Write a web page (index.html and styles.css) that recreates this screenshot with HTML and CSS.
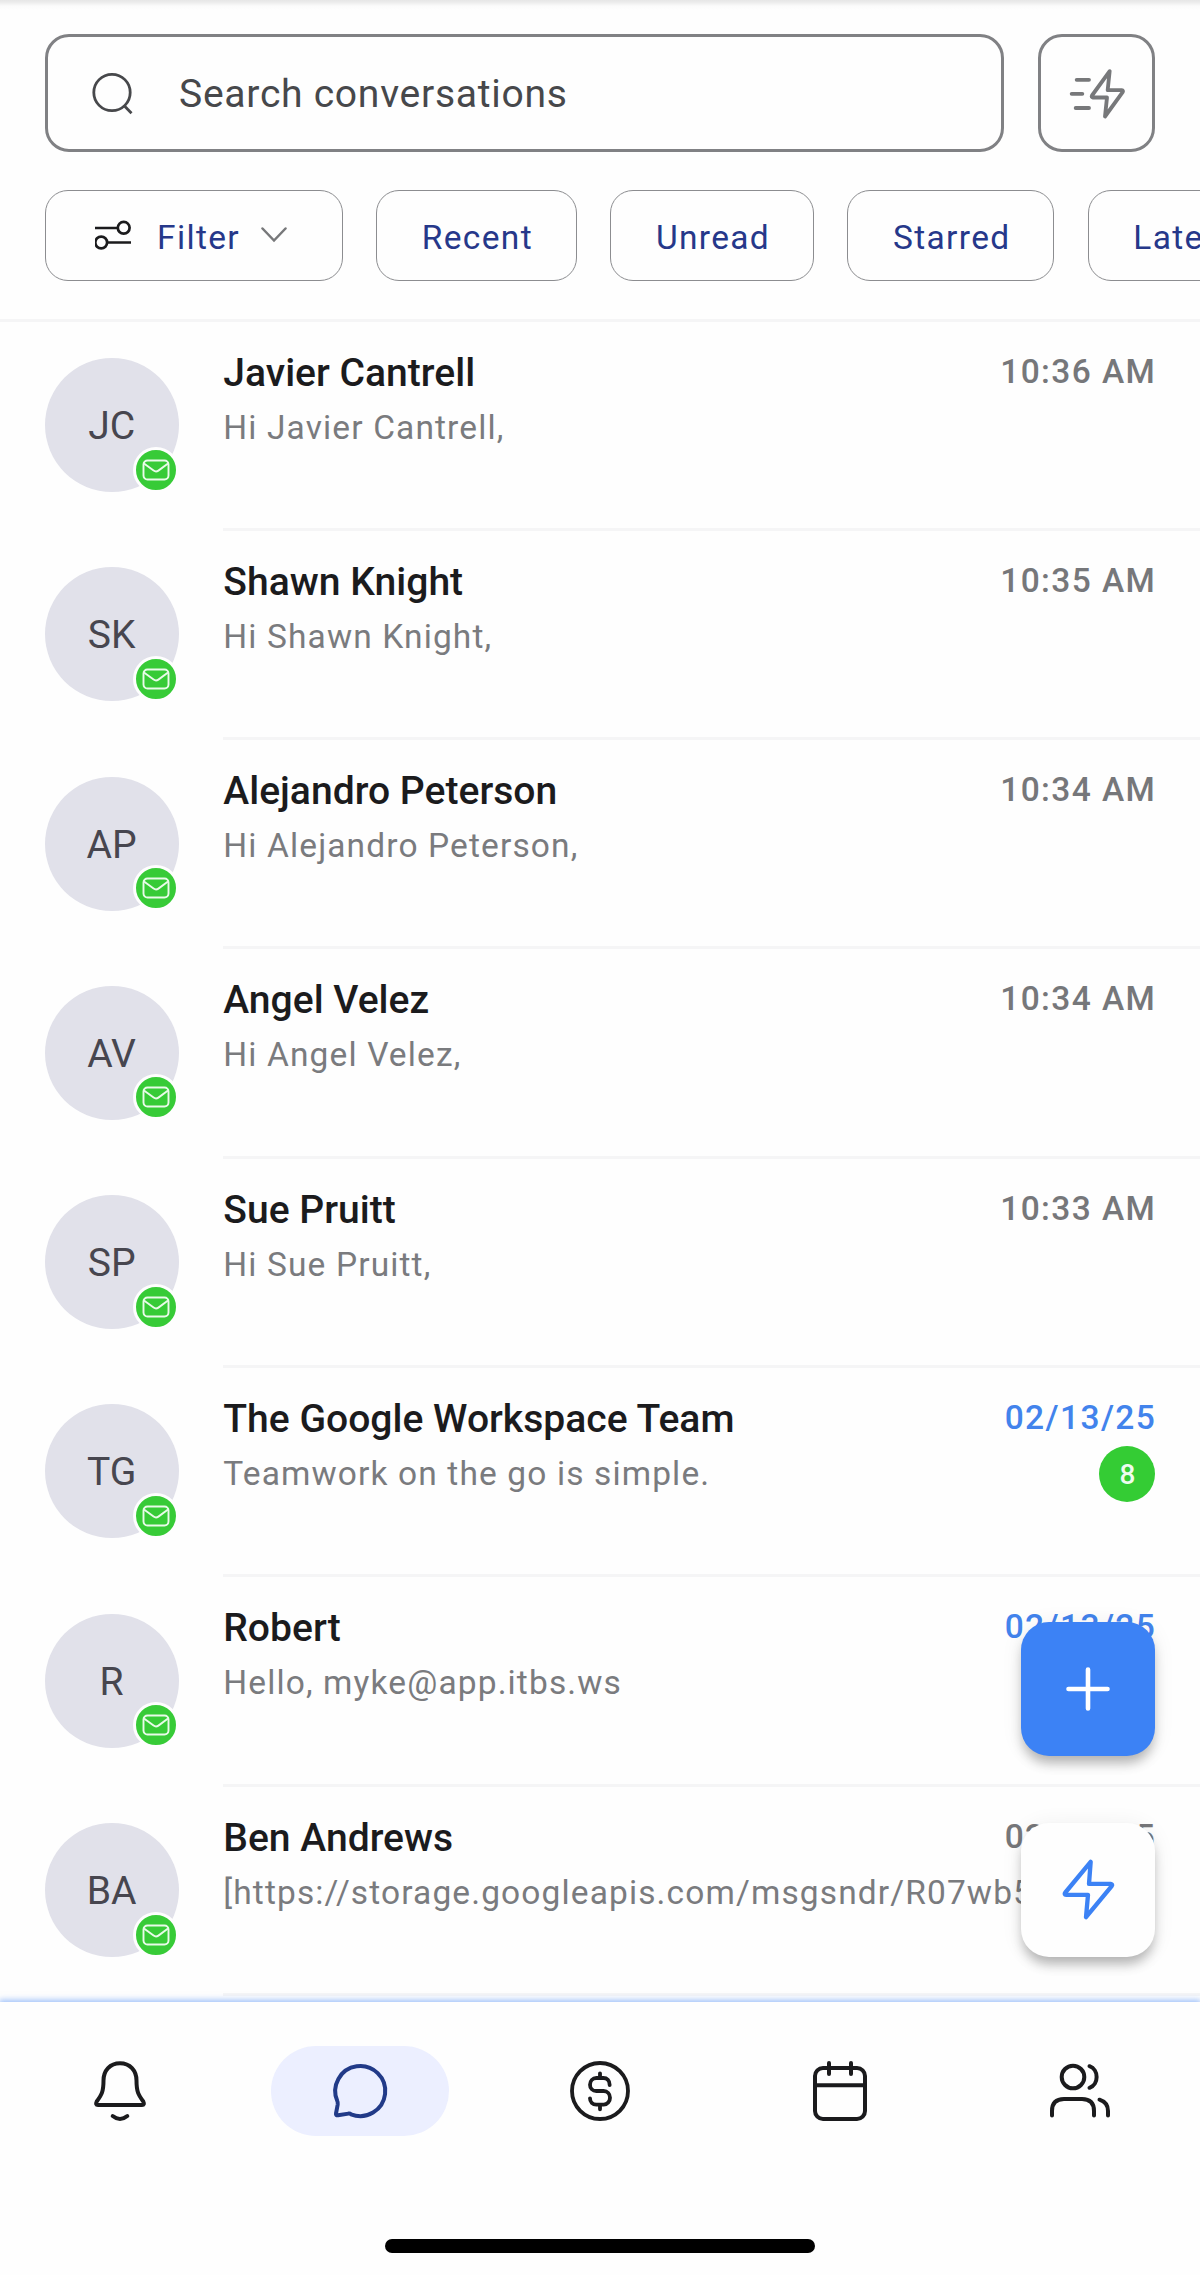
FILE: index.html
```html
<!DOCTYPE html>
<html lang="en">
<head>
<meta charset="utf-8">
<title>Conversations</title>
<link rel="stylesheet" href="styles.css">
</head>
<body>
<svg width="0" height="0" class="defs" aria-hidden="true">
  <symbol id="mail" viewBox="0 0 28 22">
    <rect x="1.5" y="1.5" width="25" height="19" rx="4"/>
    <path d="M2 4.5L11.6 11.6Q14 13.3 16.4 11.6L26 4.5"/>
  </symbol>
</svg>
<div class="app">
  <header class="header">
    <div class="search-row">
      <div class="search">
        <svg class="search-icon" width="44" height="44" viewBox="0 0 44 44"><circle cx="21" cy="21.5" r="18.2"/><path d="M33 34.5L40.5 42.2"/></svg>
        <span>Search conversations</span>
      </div>
      <button class="quick" aria-label="Quick actions">
        <svg width="76" height="76" viewBox="-3 -4.5 228 228"><path d="M50 70H87M35 112H67M47 154.500H87M149 44L143 101H185Q191 102 188 107L135 180L141 123H99Q93 122 96 117Z"/></svg>
      </button>
    </div>
    <div class="chips">
      <button class="chip chip-filter">
        <svg class="sliders" width="36" height="30" viewBox="0 0 36 30"><path d="M0 8H22.500M13 22.500H36"/><circle cx="28.700" cy="7.800" r="5.900"/><circle cx="6.200" cy="22.500" r="5.900"/></svg>
        <span>Filter</span>
        <svg class="chevron" width="26" height="16" viewBox="0 0 26 16"><path d="M1.500 1.500L13 13.500L24.500 1.500"/></svg>
      </button>
      <button class="chip">Recent</button>
      <button class="chip">Unread</button>
      <button class="chip">Starred</button>
      <button class="chip">Latest</button>
    </div>
  </header>

  <main class="list">
    <article class="row">
      <div class="avatar">JC<span class="channel"><svg><use href="#mail"/></svg></span></div>
      <div class="body">
        <div class="text"><div class="name">Javier Cantrell</div><div class="preview">Hi Javier Cantrell,</div></div>
        <div class="meta"><time>10:36 AM</time></div>
      </div>
    </article>
    <article class="row">
      <div class="avatar">SK<span class="channel"><svg><use href="#mail"/></svg></span></div>
      <div class="body">
        <div class="text"><div class="name">Shawn Knight</div><div class="preview">Hi Shawn Knight,</div></div>
        <div class="meta"><time>10:35 AM</time></div>
      </div>
    </article>
    <article class="row">
      <div class="avatar">AP<span class="channel"><svg><use href="#mail"/></svg></span></div>
      <div class="body">
        <div class="text"><div class="name">Alejandro Peterson</div><div class="preview">Hi Alejandro Peterson,</div></div>
        <div class="meta"><time>10:34 AM</time></div>
      </div>
    </article>
    <article class="row">
      <div class="avatar">AV<span class="channel"><svg><use href="#mail"/></svg></span></div>
      <div class="body">
        <div class="text"><div class="name">Angel Velez</div><div class="preview">Hi Angel Velez,</div></div>
        <div class="meta"><time>10:34 AM</time></div>
      </div>
    </article>
    <article class="row">
      <div class="avatar">SP<span class="channel"><svg><use href="#mail"/></svg></span></div>
      <div class="body">
        <div class="text"><div class="name">Sue Pruitt</div><div class="preview">Hi Sue Pruitt,</div></div>
        <div class="meta"><time>10:33 AM</time></div>
      </div>
    </article>
    <article class="row unread">
      <div class="avatar">TG<span class="channel"><svg><use href="#mail"/></svg></span></div>
      <div class="body">
        <div class="text"><div class="name">The Google Workspace Team</div><div class="preview">Teamwork on the go is simple.</div></div>
        <div class="meta"><time>02/13/25</time><span class="count">8</span></div>
      </div>
    </article>
    <article class="row unread">
      <div class="avatar">R<span class="channel"><svg><use href="#mail"/></svg></span></div>
      <div class="body">
        <div class="text"><div class="name">Robert</div><div class="preview">Hello, myke@app.itbs.ws</div></div>
        <div class="meta"><time>02/13/25</time></div>
      </div>
    </article>
    <article class="row">
      <div class="avatar">BA<span class="channel"><svg><use href="#mail"/></svg></span></div>
      <div class="body">
        <div class="text"><div class="name">Ben Andrews</div><div class="preview">[https://storage.googleapis.com/msgsndr/R07wb5</div></div>
        <div class="meta"><time>02/13/25</time></div>
      </div>
    </article>
  </main>

  <div class="fabs">
    <button class="fab fab-add" aria-label="New conversation">
      <svg width="48" height="48" viewBox="0 0 48 48"><path d="M4.500 24H43.500M24 4.500V43.500"/></svg>
    </button>
    <button class="fab fab-quick" aria-label="Shortcuts">
      <svg width="80" height="80" viewBox="144 1.500 240 240"><path d="M272 37L267 103H332Q339 104 335 110L258 203L264 136H199Q191 135 196 129Z"/></svg>
    </button>
  </div>

  <nav class="nav">
    <div class="tabs">
      <a class="tab"><svg viewBox="0 0 72 72"><path d="M36 8.200C26 8.200 19.500 15.500 19.500 25.500C19.500 37 17.500 40 12.700 46.500Q11 50 14 50H58Q61 50 59.300 46.500C54.500 40 52.500 37 52.500 25.500C52.500 15.500 46 8.200 36 8.200Z"/><path d="M28.700 61Q36 67 43.300 61"/></svg></a>
      <a class="tab active"><svg viewBox="0 0 72 72"><path d="M13.300 46A25 25 0 1 1 27 59.300Q26 58.400 24.500 58.600L14 60.300Q11.600 60.500 12 58.500L13.700 49.500Q14 47.500 13.300 46Z"/></svg></a>
      <a class="tab"><svg viewBox="12 13 216 216" class="coin"><circle cx="120" cy="121" r="84"/><path d="M149 103C149 90 141 82 130 82H109C98 82 90 91 90 102S98 121 109 121H131C142 121 150 130 150 141S142 162 131 162H109C98 162 90 154 90 143M120 68V82M120 162V176"/></svg></a>
      <a class="tab"><svg viewBox="0 0 72 72"><rect x="11" y="13" width="50" height="51" rx="8"/><path d="M11 30.300H61M25 8V19M47 8V19"/></svg></a>
      <a class="tab"><svg viewBox="0 0 72 72"><ellipse cx="29" cy="22" rx="11.300" ry="11.300"/><path d="M8 60.500V56Q8 44 20 44H38Q50 44 50 56V60.500M45.500 11.200C55 14.500 55 29.500 45.500 32.800M55.500 44.700Q64 47.500 64 56V60.500"/></svg></a>
    </div>
    <div class="home-bar"></div>
  </nav>
</div>
</body>
</html>
```
FILE: styles.css
```css
* { box-sizing: border-box; }

body {
  margin: 0;
  background: #fefefe;
  font-family: Roboto, sans-serif;
  color: #1b1b1d;
}

button { margin: 0; font: inherit; background: none; }
svg { display: block; flex: none; fill: none; stroke: currentColor; }
.defs { position: absolute; }

.app {
  position: relative;
  width: 1200px;
  height: 2275px;
  overflow: hidden;
  display: flex;
  flex-direction: column;
}

/* Header */
.header {
  flex: none;
  height: 321.5px;
  padding-top: 34px;
  border-bottom: 3px solid #f5f5f6;
  background: linear-gradient(#e6e6e6, #ebebeb 2px, #fbfbfb 6px, #fefefe 10px);
}

.search-row { display: flex; gap: 34px; padding: 0 44.600px; }

.search, .quick {
  height: 117.500px;
  border: 3px solid #808184;
  border-radius: 24px;
}

.search {
  flex: 1;
  display: flex;
  align-items: center;
  gap: 44px;
  padding-left: 43.400px;
  font-size: 39.070px;
  letter-spacing: 0.720px;
  color: #47484b;
}

.search span { padding-top: 2px; }
.search-icon { stroke-width: 2.800; }

.quick {
  width: 117px;
  padding: 0;
  display: flex;
  align-items: center;
  justify-content: center;
  color: #77787a;
}

.quick svg { stroke-width: 11.500; stroke-linecap: round; stroke-linejoin: round; }

.chips { display: flex; gap: 33.500px; padding: 38px 0 0 44.600px; }

.chip {
  flex: none;
  height: 91.500px;
  border: 1.200px solid #8c8d90;
  border-radius: 23px;
  font-size: 33.490px;
  letter-spacing: 1.350px;
  color: #26388a;
}

.chip + .chip { padding: 4px 42.700px 0 44.700px; }

.chip-filter {
  width: 298px;
  display: flex;
  align-items: center;
  padding: 4px 0 0 49px;
}

.chip-filter span { margin: 0 21px 0 26.500px; }
.sliders { color: #1b1b1d; stroke-width: 2.700; margin-top: -5px; }
.chevron { color: #77787a; stroke-width: 2.500; stroke-linecap: round; margin-top: -4px; }

/* Conversation list */
.list { flex: none; height: 1680.500px; overflow: hidden; }

.row { display: flex; height: 209.300px; padding-left: 44.650px; }

.avatar {
  position: relative;
  flex: none;
  width: 134px;
  height: 134px;
  margin-top: 36.500px;
  border-radius: 50%;
  background: #e1e1ea;
  color: #47464f;
  font-size: 39.070px;
  line-height: 137px;
  text-align: center;
}

.channel {
  position: absolute;
  left: 88.500px;
  top: 88.500px;
  width: 46px;
  height: 46px;
  border: 3px solid #fefefe;
  border-radius: 50%;
  background: #37cb37;
  color: #e9fbe9;
  display: flex;
  align-items: center;
  justify-content: center;
}

.channel svg { width: 28px; height: 22px; stroke-width: 1.900; }

.body {
  flex: 1;
  min-width: 0;
  display: flex;
  margin-left: 44.650px;
  padding: 25px 43.800px 0 0;
  border-bottom: 3px solid #f5f5f6;
}

.text { flex: 1; min-width: 0; white-space: nowrap; }
.name { font-size: 39.070px; font-weight: 500; line-height: 53px; }

.preview {
  font-size: 33.490px;
  letter-spacing: 1.130px;
  line-height: 56px;
  color: #7a7b7e;
}

.meta {
  display: flex;
  flex-direction: column;
  align-items: flex-end;
  width: 160px;
  margin-left: -20px;
}

time {
  font-size: 33.490px;
  font-weight: 500;
  letter-spacing: 1.400px;
  line-height: 50px;
  color: #76777a;
  white-space: nowrap;
}

.unread time { color: #4283ec; }

.count {
  width: 56px;
  height: 56px;
  margin: 3px 0.800px 0 0;
  border-radius: 50%;
  background: #34cc34;
  color: #effcef;
  font-size: 28px;
  font-weight: 500;
  line-height: 57px;
  text-align: center;
}

/* Floating buttons over the list */
.fabs {
  position: absolute;
  right: 44.650px;
  top: 1622px;
  display: flex;
  flex-direction: column;
  gap: 67px;
}

.fab {
  width: 134px;
  height: 134px;
  padding: 0;
  border: 0;
  border-radius: 28px;
  display: flex;
  align-items: center;
  justify-content: center;
  box-shadow: 0 9px 12px -2px rgba(0, 0, 0, .27), 0 2px 22px rgba(0, 0, 0, .07);
}

.fab svg { stroke-linecap: round; stroke-linejoin: round; }
.fab-add { background: #3c82f5; color: #fff; }
.fab-add svg { stroke-width: 4.600; }
.fab-quick { background: #fefefe; color: #3c82f5; }
.fab-quick svg { stroke-width: 13; }

/* Bottom navigation */
.nav {
  position: relative;
  flex: 1;
  display: flex;
  flex-direction: column;
  align-items: center;
  padding: 44px 0 22px;
  background: #fefefe;
  box-shadow: 0 -1px 6px 1px rgba(59, 130, 246, .5);
}

.tabs { display: flex; width: 100%; justify-content: space-around; }

.tab {
  width: 178.600px;
  height: 89.500px;
  border-radius: 45px;
  display: flex;
  align-items: center;
  justify-content: center;
}

.tab svg {
  width: 72px;
  height: 72px;
  stroke-width: 4;
  stroke-linecap: round;
  stroke-linejoin: round;
}

.tab .coin { stroke-width: 11.500; }
.active { background: #ecefff; color: #213a88; }

.home-bar {
  width: 430px;
  height: 14.500px;
  margin-top: auto;
  border-radius: 8px;
  background: #000;
}
```
